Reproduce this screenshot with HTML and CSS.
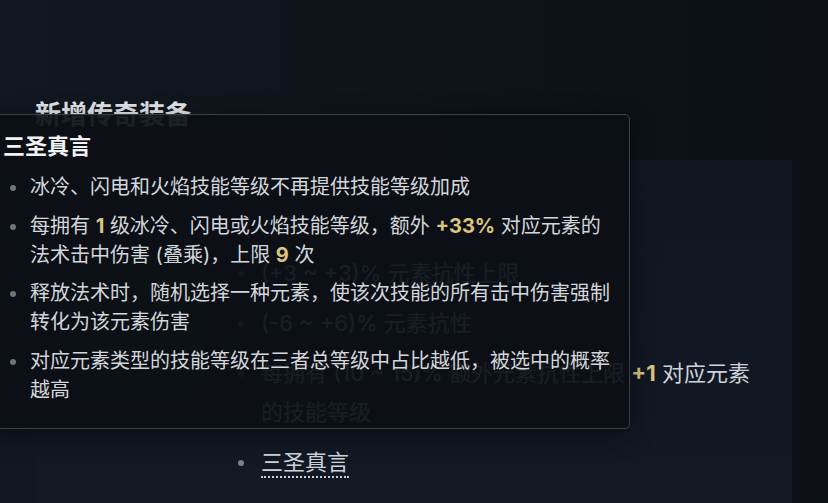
FILE: index.html
```html
<!DOCTYPE html>
<html lang="zh-CN">
<head>
<meta charset="utf-8">
<link rel="stylesheet" href="styles.css">
</head>
<body>
<main class="page">
  <h2 class="section-title">新增传奇装备</h2>
  <section class="card">
    <div class="card-media"><div class="item-box"></div></div>
    <ul class="affixes">
      <li>(+3 ~ +3)% 元素抗性上限</li>
      <li>(-6 ~ +6)% 元素抗性</li>
      <li>每拥有 (10 ~ 15)% 额外元素抗性上限 <b class="num">+1</b> 对应元素的技能等级</li>
      <li><span class="term">三圣真言</span></li>
    </ul>
  </section>
  <div class="tooltip">
    <div class="tip-title">三圣真言</div>
    <ul class="tip-list">
      <li>冰冷、闪电和火焰技能等级不再提供技能等级加成</li>
      <li>每拥有 <b class="num">1</b> 级冰冷、闪电或火焰技能等级，额外 <b class="num">+33%</b> 对应元素的法术击中伤害 (叠乘)，上限 <b class="num">9</b> 次</li>
      <li>释放法术时，随机选择一种元素，使该次技能的所有击中伤害强制转化为该元素伤害</li>
      <li>对应元素类型的技能等级在三者总等级中占比越低，被选中的概率越高</li>
    </ul>
  </div>
</main>
</body>
</html>
```
FILE: styles.css
```css
* { box-sizing: border-box; }
html, body { margin: 0; height: 100%; }
body {
  background: linear-gradient(90deg, #111821 0%, #0e141a 45%, #0c1014 100%);
  font-family: "Inter", "Noto Sans CJK SC", sans-serif;
  color: #d5d8dd;
  overflow: hidden;
}
.page {
  position: relative;
  height: 503px;
  overflow: hidden;
  padding: 95px 36px 0 35px;
}
.section-title {
  margin: 0;
  font-size: 26px;
  line-height: 40px;
  font-weight: 700;
  color: #e4e6ea;
}
.card {
  margin-top: 25px;
  width: 757px;
  height: 343px;
  background: linear-gradient(180deg, #111722 0%, #121824 100%);
  display: flex;
  padding: 95px 0 0 40px;
}
.card-media { width: 166px; flex: none; }
.item-box {
  width: 130px;
  height: 130px;
  background: rgba(255,255,255,0.025);
  border-radius: 4px;
}
.affixes {
  list-style: none;
  margin: 0;
  padding: 0;
  width: 512px;
  font-size: 22px;
  line-height: 39px;
  color: #cfd3d9;
}
.affixes li {
  position: relative;
  padding-left: 20px;
  margin-bottom: 11px;
}
.affixes li::before {
  content: "";
  position: absolute;
  left: -3px;
  top: 17px;
  width: 6px;
  height: 6px;
  border-radius: 50%;
  background: #7b8088;
}
.affixes li:first-child { margin-top: -1px; }
.term {
  border-bottom: 2px dotted #c9ccd2;
  padding-bottom: 1px;
}
.num { color: #dcc47f; font-weight: 700; }
.tooltip {
  position: absolute;
  left: -14px;
  top: 114px;
  width: 644px;
  padding: 16px 19px 23px 16px;
  background: rgba(12, 16, 21, 0.93);
  border: 1px solid #3b4049;
  border-radius: 5px;
  box-shadow: 0 6px 24px rgba(0,0,0,0.45);
}
.tip-title {
  font-size: 22px;
  line-height: 30px;
  font-weight: 700;
  color: #f1f2f4;
  margin-left: 0;
  margin-bottom: 12px;
}
.tip-list {
  list-style: none;
  margin: 0;
  padding: 0 0 0 27px;
  font-size: 20px;
  line-height: 29px;
  color: #d3d6db;
}
.tip-list li {
  position: relative;
  margin-bottom: 9.5px;
}
.tip-list li:last-child { margin-bottom: 0; }
.tip-list li::before {
  content: "";
  position: absolute;
  left: -20px;
  top: 12px;
  width: 6px;
  height: 6px;
  border-radius: 50%;
  background: #6e737c;
}
```
